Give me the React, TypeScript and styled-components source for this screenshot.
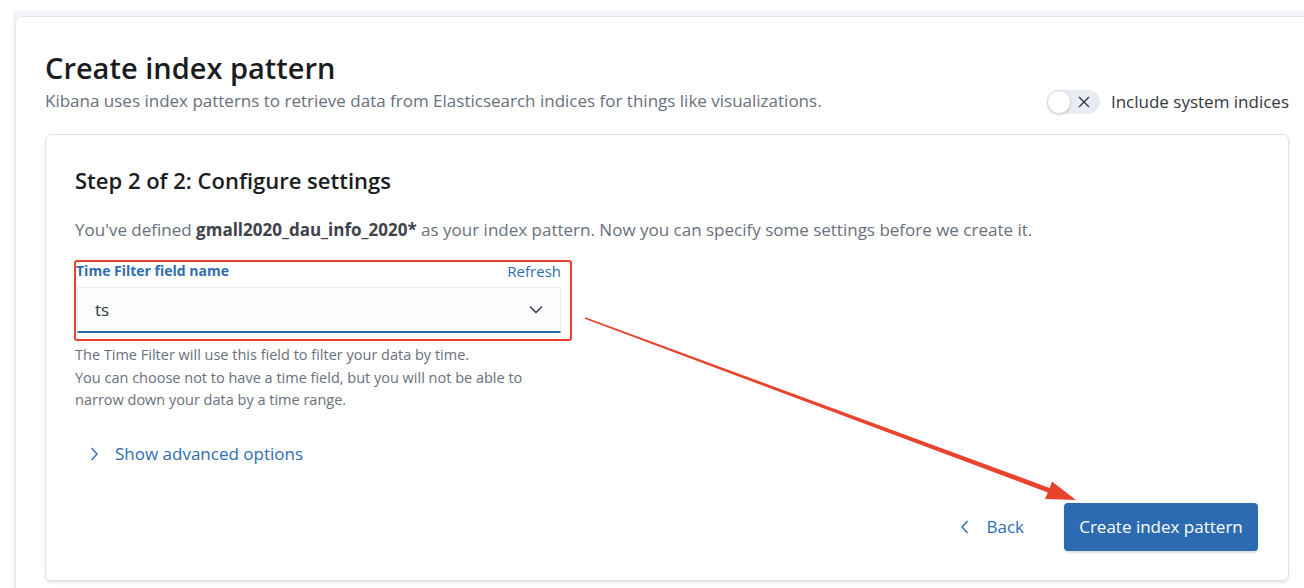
import React from 'react';
import styled, { createGlobalStyle } from 'styled-components';

const GlobalStyle = createGlobalStyle`
  html, body {
    margin: 0;
    padding: 0;
    background: #ffffff;
    font-family: "Open Sans", "Noto Sans", sans-serif;
    color: #343741;
  }
  * { box-sizing: border-box; }
`;

const ChevronDown = () => (
    <svg width="14" height="9" viewBox="0 0 14 9" fill="none">
        <path d="M1 1.5L7 7.5L13 1.5" stroke="#343741" strokeWidth="1.4" />
    </svg>
);

const ChevronRight = ({ color }: { color: string }) => (
    <svg width="8" height="14" viewBox="0 0 8 14" fill="none">
        <path d="M1.5 1L7 7L1.5 13" stroke={color} strokeWidth="1.4" />
    </svg>
);

const ChevronLeft = ({ color }: { color: string }) => (
    <svg width="8" height="14" viewBox="0 0 8 14" fill="none">
        <path d="M6.5 1L1 7L6.5 13" stroke={color} strokeWidth="1.4" />
    </svg>
);

const CrossIcon = () => (
    <svg width="12" height="12" viewBox="0 0 12 12" fill="none">
        <path d="M1 1L11 11M11 1L1 11" stroke="#343741" strokeWidth="1.4" />
    </svg>
);

// red annotation arrow drawn over the page
const Arrow = () => (
    <ArrowLayer width="1304" height="588" viewBox="0 0 1304 588">
        <polygon
            points="585.3,317.25 1049.6,487.9 1052,481.5 1076,500 1045,499 1047.8,492.5 584.7,318.75"
            fill="#e8432d"
        />
    </ArrowLayer>
);

const App: React.FC = () => (
    <>
        <GlobalStyle />
        <Page>
            <Frame>
                <Panel>
                    <Header>
                        <TitleBlock>
                            <Title>Create index pattern</Title>
                            <Subtitle>
                                Kibana uses index patterns to retrieve data from Elasticsearch indices for things like visualizations.
                            </Subtitle>
                        </TitleBlock>
                        <SwitchRow>
                            <SwitchTrack>
                                <SwitchKnob />
                                <CrossIcon />
                            </SwitchTrack>
                            <SwitchLabel>Include system indices</SwitchLabel>
                        </SwitchRow>
                    </Header>
                    <StepCard>
                        <StepTitle>Step 2 of 2: Configure settings</StepTitle>
                        <Lead>
                            You&apos;ve defined <strong>gmall2020_dau_info_2020*</strong> as your index pattern. Now you can specify some settings before we create it.
                        </Lead>
                        <FieldBox>
                            <LabelRow>
                                <FieldLabel>Time Filter field name</FieldLabel>
                                <LinkText>Refresh</LinkText>
                            </LabelRow>
                            <SelectBox>
                                <span>ts</span>
                                <ChevronDown />
                            </SelectBox>
                        </FieldBox>
                        <HelpText>
                            The Time Filter will use this field to filter your data by time.
                            <br />
                            You can choose not to have a time field, but you will not be able to narrow down your data by a time range.
                        </HelpText>
                        <AdvancedToggle>
                            <ChevronRight color="#2f6db3" />
                            <span>Show advanced options</span>
                        </AdvancedToggle>
                        <Actions>
                            <BackButton>
                                <ChevronLeft color="#2f6db3" />
                                <span>Back</span>
                            </BackButton>
                            <PrimaryButton>Create index pattern</PrimaryButton>
                        </Actions>
                    </StepCard>
                </Panel>
            </Frame>
            <Arrow />
        </Page>
    </>
);

export default App;

const Page = styled.div`
    position: relative;
    width: 1304px;
    height: 588px;
    overflow: hidden;
    padding: 11px 0 0 13px;
`;

const Frame = styled.div`
    background: #f1f4f9;
    padding: 5px 0 0 2px;
    height: 100%;
`;

const Panel = styled.div`
    background: #ffffff;
    border-top-left-radius: 6px;
    border-left: 1px solid #e3e8f0;
    border-top: 1px solid #e3e8f0;
    height: 100%;
    padding: 33px 15px 0 29px;
`;

const Header = styled.div`
    display: flex;
    justify-content: space-between;
    align-items: flex-end;
`;

const TitleBlock = styled.div`
    display: flex;
    flex-direction: column;
    gap: 3px;
`;

const Title = styled.h1`
    margin: 0;
    font-size: 29px;
    line-height: 36px;
    font-weight: 600;
    color: #1a1c21;
`;

const Subtitle = styled.p`
    margin: 0;
    font-size: 17px;
    line-height: 24px;
    color: #69707d;
`;

const SwitchRow = styled.div`
    display: flex;
    align-items: center;
    gap: 11px;
    margin-bottom: -1px;
`;

const SwitchTrack = styled.div`
    width: 53px;
    height: 24px;
    border-radius: 12px;
    background: #e9edf3;
    display: flex;
    align-items: center;
    justify-content: space-between;
    padding-right: 10px;
`;

const SwitchKnob = styled.div`
    width: 24px;
    height: 24px;
    border-radius: 50%;
    background: #ffffff;
    border: 1px solid #d3dae6;
    box-shadow: 0 1px 2px rgba(0, 0, 0, 0.15);
`;

const SwitchLabel = styled.span`
    font-size: 17px;
    line-height: 24px;
    color: #343741;
`;

const StepCard = styled.div`
    margin-top: 21px;
    border: 1px solid #dfe4ec;
    border-radius: 6px;
    box-shadow: 0 2px 3px rgba(152, 162, 179, 0.25);
    padding: 30px 30px 29px 29px;
    display: flex;
    flex-direction: column;
`;

const StepTitle = styled.h2`
    margin: 0;
    font-size: 22px;
    line-height: 30px;
    font-weight: 600;
    color: #1a1c21;
`;

const Lead = styled.p`
    margin: 23px 0 0;
    font-size: 17px;
    line-height: 24px;
    color: #69707d;

    strong {
        color: #3f434b;
        font-weight: 700;
    }
`;

const FieldBox = styled.div`
    align-self: flex-start;
    margin: 18px 0 0 -1px;
    border: 2px solid #e5432f;
    border-radius: 3px;
    padding: 0 9px 6px 0;
    width: 498px;
`;

const LabelRow = styled.div`
    display: flex;
    justify-content: space-between;
    align-items: center;
    height: 17px;
    margin-bottom: 8px;
`;

const FieldLabel = styled.span`
    font-size: 14px;
    font-weight: 700;
    color: #2f6db3;
`;

const LinkText = styled.span`
    font-size: 15px;
    color: #2f6db3;
`;

const SelectBox = styled.div`
    margin-left: 1px;
    height: 46px;
    background: #fbfcfd;
    border: 1px solid #e8ebf0;
    border-bottom: 2px solid #2f6db3;
    display: flex;
    align-items: center;
    justify-content: space-between;
    padding: 0 17px 0 17px;
    font-size: 17px;
    color: #343741;
`;

const HelpText = styled.p`
    margin: 3px 0 0;
    width: 486px;
    font-size: 14.5px;
    line-height: 22.5px;
    color: #69707d;
`;

const AdvancedToggle = styled.div`
    margin: 30px 0 0 15px;
    display: flex;
    align-items: center;
    gap: 17px;
    font-size: 17px;
    line-height: 24px;
    color: #2f6db3;
`;

const Actions = styled.div`
    margin-top: 37px;
    display: flex;
    justify-content: flex-end;
    align-items: center;
    gap: 40px;
`;

const BackButton = styled.div`
    display: flex;
    align-items: center;
    gap: 17px;
    font-size: 17px;
    color: #2f6db3;
`;

const PrimaryButton = styled.button`
    height: 48px;
    width: 194px;
    border: none;
    border-radius: 4px;
    background: #2c6bb0;
    color: #ffffff;
    font-family: inherit;
    font-size: 17px;
    box-shadow: 0 2px 2px rgba(0, 0, 0, 0.12);
`;

const ArrowLayer = styled.svg`
    position: absolute;
    top: 0;
    left: 0;
    pointer-events: none;
`;
